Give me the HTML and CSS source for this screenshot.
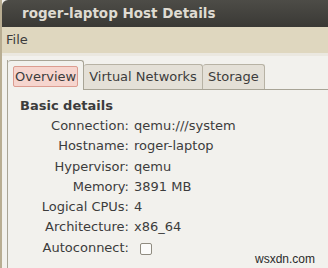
FILE: index.html
```html
<!DOCTYPE html>
<html lang="en">
<head>
    <meta charset="UTF-8">
    <title>roger-laptop Host Details</title>
    <link rel="stylesheet" href="styles.css">
</head>
<body>

<div class="window">
    <!-- Title bar -->
    <div class="titlebar">roger-laptop Host Details</div>

    <!-- Menu bar -->
    <div class="menubar"><span class="menu-item">File</span></div>

    <div class="notebook">
        <div class="tabs">
            <div class="tab active"><span class="focus">Overview</span></div>
            <div class="tab">Virtual Networks</div>
            <div class="tab">Storage</div>
        </div>

        <div class="page">
            <div class="section-title">Basic details</div>
            <div class="details">
                <div class="label">Connection:</div><div class="value">qemu:///system</div>
                <div class="label">Hostname:</div><div class="value">roger-laptop</div>
                <div class="label">Hypervisor:</div><div class="value">qemu</div>
                <div class="label">Memory:</div><div class="value">3891 MB</div>
                <div class="label">Logical CPUs:</div><div class="value">4</div>
                <div class="label">Architecture:</div><div class="value">x86_64</div>
                <div class="label">Autoconnect:</div><div class="value"><span class="checkbox"></span></div>
            </div>
        </div>
    </div>
</div>

<div class="watermark">wsxdn.com</div>

</body>
</html>
```

FILE: styles.css
```css
body {
    margin: 0;
    padding: 0;
    width: 328px;
    height: 268px;
    overflow: hidden;
    font-family: 'DejaVu Sans', sans-serif;
    font-size: 13px;
    color: #3c3c3c;
    background-color: #f2f1ed;
    position: relative;
}

.window {
    height: 268px;
    border-left: 2px solid #b8ad92;
    box-sizing: border-box;
}

/* Title bar */
.titlebar {
    height: 27px;
    line-height: 27px;
    padding-left: 20px;
    font-size: 13.5px;
    font-weight: bold;
    color: #dfdbd2;
    background: linear-gradient(#4d4c47, #3a3935);
    border-top-left-radius: 6px;
}

/* Menu bar */
.menubar {
    height: 26px;
    line-height: 26px;
    padding-left: 4px;
    background-color: #dfd7bf;
    border-bottom: 3px solid #ebe8e0;
}

.menu-item {
    color: #3c3c3c;
}

/* Notebook */
.notebook {
    margin-left: 5px;
    margin-top: 4px;
    border-left: 1px solid #a8a496;
    height: 210px;
}

.tabs {
    display: flex;
    align-items: flex-end;
    height: 29px;
    border-bottom: 1px solid #a8a496;
}

.tab {
    height: 24px;
    line-height: 24px;
    padding: 0 5px;
    background-color: #e4e0d7;
    border: 1px solid #b7b2a4;
    border-bottom: none;
    border-left: none;
    border-radius: 3px 3px 0 0;
    color: #3c3c3c;
}

.tab.active {
    height: 29px;
    margin-bottom: -1px;
    padding: 0 5px;
    background-color: #f2f1ed;
    border-color: #a8a496;
    display: flex;
    align-items: center;
}

.focus {
    display: block;
    height: 19px;
    line-height: 19px;
    padding: 0 1px;
    background-color: #f6d5ce;
    border: 1px solid #dc9c90;
    border-radius: 2px;
    margin-top: 1px;
}

/* Page content */
.page {
    padding: 6px 0 0 12px;
}

.section-title {
    font-weight: bold;
    height: 20px;
    line-height: 20px;
}

.details {
    display: grid;
    grid-template-columns: 109px auto;
    column-gap: 5px;
    grid-auto-rows: 20.3px;
    line-height: 20px;
}

.label {
    text-align: right;
}

.checkbox {
    display: inline-block;
    width: 10px;
    height: 10px;
    margin-left: 6px;
    margin-top: 5px;
    border: 1px solid #8f8b80;
    border-radius: 2px;
    background-color: #fbfbfa;
    vertical-align: top;
}

.watermark {
    position: absolute;
    left: 255px;
    top: 252px;
    font-family: 'Liberation Sans', sans-serif;
    font-size: 12px;
    color: #2a2a2a;
}
```
